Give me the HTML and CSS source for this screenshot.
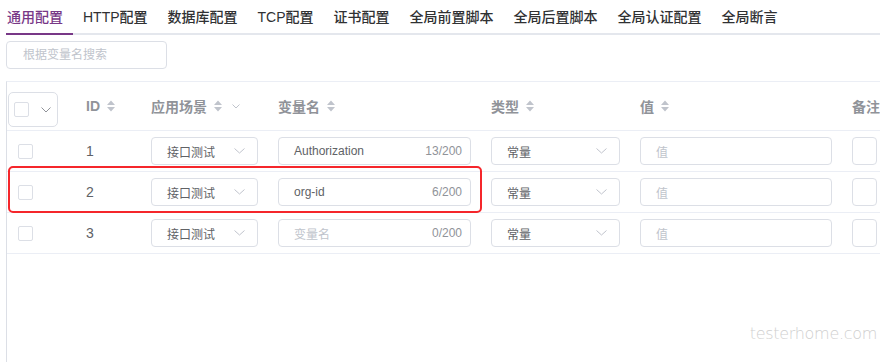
FILE: index.html
```html
<!DOCTYPE html>
<html lang="zh-CN">
<head>
    <meta charset="UTF-8">
    <title>环境配置</title>
    <link rel="stylesheet" href="styles.css">
</head>
<body>
    <div class="tabs">
        <a class="tab active" href="#">通用配置</a>
        <a class="tab" href="#">HTTP配置</a>
        <a class="tab" href="#">数据库配置</a>
        <a class="tab" href="#">TCP配置</a>
        <a class="tab" href="#">证书配置</a>
        <a class="tab" href="#">全局前置脚本</a>
        <a class="tab" href="#">全局后置脚本</a>
        <a class="tab" href="#">全局认证配置</a>
        <a class="tab" href="#">全局断言</a>
    </div>

    <div class="search">
        <input type="text" placeholder="根据变量名搜索">
    </div>

    <div class="table">
        <div class="row head">
            <div class="cell">
                <div class="select-all">
                    <span class="checkbox"></span>
                    <svg class="chev" width="10" height="6" viewBox="0 0 10 6"><path d="M0.5 0.5 L5 5 L9.5 0.5" fill="none" stroke="#909399" stroke-width="1"/></svg>
                </div>
            </div>
            <div class="cell">ID <svg class="caret" width="10" height="14" viewBox="0 0 10 14"><path d="M1 6 L5 1.5 L9 6 Z M1 8 L5 12.5 L9 8 Z" fill="#c0c4cc"/></svg></div>
            <div class="cell">应用场景 <svg class="caret" width="10" height="14" viewBox="0 0 10 14"><path d="M1 6 L5 1.5 L9 6 Z M1 8 L5 12.5 L9 8 Z" fill="#c0c4cc"/></svg>
                <svg class="filter" width="8" height="5" viewBox="0 0 8 5"><path d="M0.5 0.5 L4 4 L7.5 0.5" fill="none" stroke="#c0c4cc" stroke-width="1"/></svg></div>
            <div class="cell">变量名 <svg class="caret" width="10" height="14" viewBox="0 0 10 14"><path d="M1 6 L5 1.5 L9 6 Z M1 8 L5 12.5 L9 8 Z" fill="#c0c4cc"/></svg></div>
            <div class="cell">类型 <svg class="caret" width="10" height="14" viewBox="0 0 10 14"><path d="M1 6 L5 1.5 L9 6 Z M1 8 L5 12.5 L9 8 Z" fill="#c0c4cc"/></svg></div>
            <div class="cell">值 <svg class="caret" width="10" height="14" viewBox="0 0 10 14"><path d="M1 6 L5 1.5 L9 6 Z M1 8 L5 12.5 L9 8 Z" fill="#c0c4cc"/></svg></div>
            <div class="cell">备注</div>
        </div>

        <div class="row">
            <div class="cell"><span class="checkbox row-check"></span></div>
            <div class="cell id">1</div>
            <div class="cell"><div class="field select"><span>接口测试</span><svg width="11" height="6" viewBox="0 0 11 6"><path d="M0.5 0.5 L5.5 5 L10.5 0.5" fill="none" stroke="#c0c4cc" stroke-width="1"/></svg></div></div>
            <div class="cell"><div class="field"><span>Authorization</span><span class="count">13/200</span></div></div>
            <div class="cell"><div class="field select"><span>常量</span><svg width="11" height="6" viewBox="0 0 11 6"><path d="M0.5 0.5 L5.5 5 L10.5 0.5" fill="none" stroke="#c0c4cc" stroke-width="1"/></svg></div></div>
            <div class="cell"><div class="field"><span class="placeholder">值</span></div></div>
            <div class="cell"><div class="field"></div></div>
        </div>

        <div class="row">
            <div class="cell"><span class="checkbox row-check"></span></div>
            <div class="cell id">2</div>
            <div class="cell"><div class="field select"><span>接口测试</span><svg width="11" height="6" viewBox="0 0 11 6"><path d="M0.5 0.5 L5.5 5 L10.5 0.5" fill="none" stroke="#c0c4cc" stroke-width="1"/></svg></div></div>
            <div class="cell"><div class="field"><span>org-id</span><span class="count">6/200</span></div></div>
            <div class="cell"><div class="field select"><span>常量</span><svg width="11" height="6" viewBox="0 0 11 6"><path d="M0.5 0.5 L5.5 5 L10.5 0.5" fill="none" stroke="#c0c4cc" stroke-width="1"/></svg></div></div>
            <div class="cell"><div class="field"><span class="placeholder">值</span></div></div>
            <div class="cell"><div class="field"></div></div>
        </div>

        <div class="row">
            <div class="cell"><span class="checkbox row-check"></span></div>
            <div class="cell id">3</div>
            <div class="cell"><div class="field select"><span>接口测试</span><svg width="11" height="6" viewBox="0 0 11 6"><path d="M0.5 0.5 L5.5 5 L10.5 0.5" fill="none" stroke="#c0c4cc" stroke-width="1"/></svg></div></div>
            <div class="cell"><div class="field"><span class="placeholder">变量名</span><span class="count">0/200</span></div></div>
            <div class="cell"><div class="field select"><span>常量</span><svg width="11" height="6" viewBox="0 0 11 6"><path d="M0.5 0.5 L5.5 5 L10.5 0.5" fill="none" stroke="#c0c4cc" stroke-width="1"/></svg></div></div>
            <div class="cell"><div class="field"><span class="placeholder">值</span></div></div>
            <div class="cell"><div class="field"></div></div>
        </div>
    </div>

    <!-- annotation drawn over the screenshot -->
    <div class="highlight"></div>
    <div class="watermark">testerhome.com</div>
</body>
</html>
```

FILE: styles.css
```css
body {
    margin: 0;
    padding: 0 0 0 6px;
    font-family: "Liberation Sans", "Noto Sans CJK SC", sans-serif;
    color: #606266;
    background: #fff;
    overflow: hidden;
    height: 363px;
    position: relative;
}
.tabs {
    display: flex;
    height: 35px;
    box-shadow: inset 0 -2px 0 #e4e7ed;
}
.tab {
    display: block;
    padding: 0 10px;
    line-height: 34px;
    font-size: 14px;
    font-weight: 500;
    color: #303133;
    text-decoration: none;
    white-space: nowrap;
}
.tab:first-child {
    padding-left: 1px;
}
.tab.active {
    color: #783887;
    box-shadow: inset 0 -2px 0 #783887;
}
.search {
    margin-top: 6px;
}
.search input {
    box-sizing: border-box;
    width: 161px;
    height: 28px;
    border: 1px solid #dcdfe6;
    border-radius: 4px;
    padding: 0 16px;
    font-family: inherit;
    font-size: 12px;
    outline: none;
}
.search input::placeholder {
    color: #c0c4cc;
}
.table {
    margin-top: 12px;
    border-top: 1px solid #ebeef5;
    border-left: 1px solid #dcdfe6;
    height: 280px;
}
.row {
    display: grid;
    grid-template-columns: 69px 65px 127px 213px 149px 212px 1fr;
    height: 40px;
    border-bottom: 1px solid #ebeef5;
}
.row.head {
    height: 48px;
}
.cell {
    display: flex;
    align-items: center;
    padding: 0 10px;
    font-size: 14px;
    white-space: nowrap;
    overflow: hidden;
}
.head .cell {
    color: #909399;
    font-weight: bold;
}
.head .cell:first-child {
    padding: 0 0 0 1px;
    align-items: flex-end;
}
.caret {
    margin-left: 6px;
}
.filter {
    margin-left: 9px;
}
.select-all {
    box-sizing: border-box;
    width: 50px;
    height: 35px;
    margin-bottom: 3px;
    border: 1px solid #dcdfe6;
    border-radius: 5px;
    display: flex;
    align-items: center;
    padding-left: 5px;
}
.select-all .chev {
    margin-left: 12px;
}
.checkbox {
    box-sizing: border-box;
    display: inline-block;
    width: 15px;
    height: 15px;
    border: 1px solid #dcdfe6;
    border-radius: 2px;
    background: #fff;
}
.row-check {
    margin-left: 1px;
}
.id {
    color: #606266;
}
.field {
    box-sizing: border-box;
    width: 100%;
    height: 28px;
    border: 1px solid #dcdfe6;
    border-radius: 4px;
    display: flex;
    align-items: center;
    justify-content: space-between;
    padding: 0 8px 0 15px;
    font-size: 12px;
    color: #606266;
}
.field.select {
    padding-right: 12px;
}
.count {
    color: #909399;
}
.placeholder {
    color: #c0c4cc;
}
.highlight {
    position: absolute;
    left: 8px;
    top: 166px;
    width: 470px;
    height: 43px;
    border: 2px solid #f5262b;
    border-radius: 5px;
}
.watermark {
    position: absolute;
    right: 3px;
    top: 324px;
    font-family: "DejaVu Sans", sans-serif;
    font-weight: 200;
    font-size: 16px;
    letter-spacing: -0.3px;
    color: #cfcfcf;
}
```
